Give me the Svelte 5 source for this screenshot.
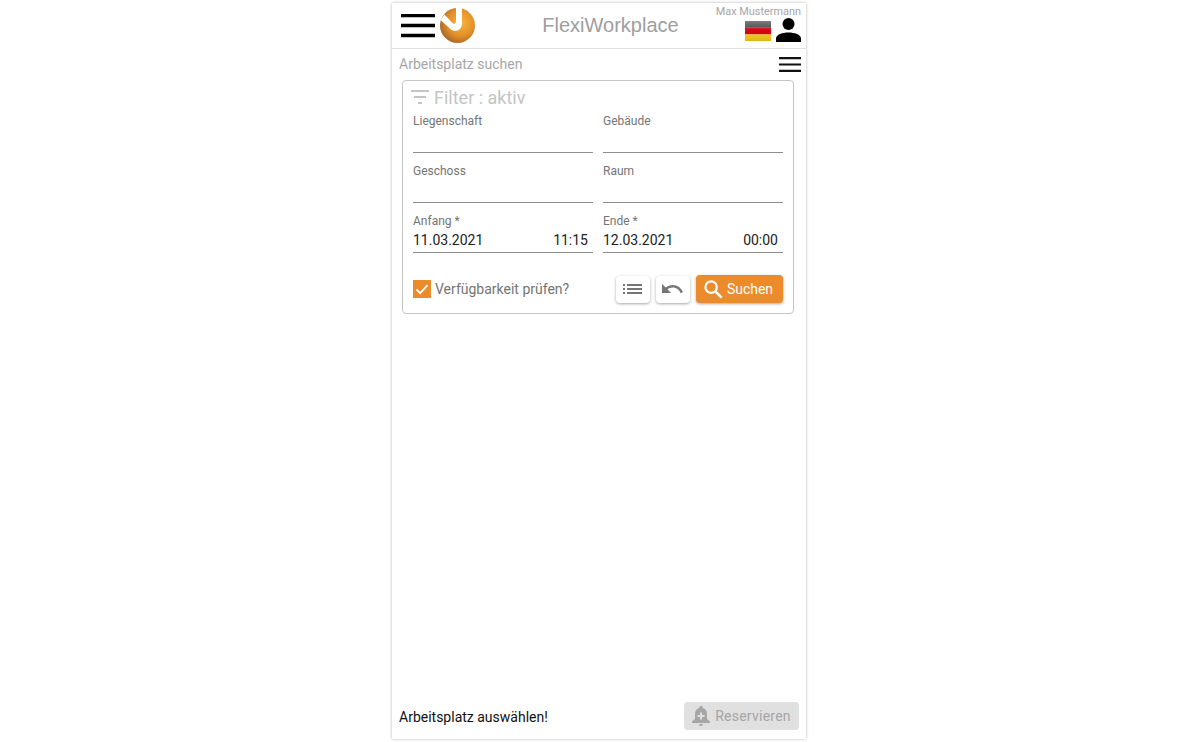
<script>
  const rows = [
    [{ label: 'Liegenschaft' }, { label: 'Gebäude' }],
    [{ label: 'Geschoss' }, { label: 'Raum' }],
    [
      { label: 'Anfang *', date: '11.03.2021', time: '11:15' },
      { label: 'Ende *', date: '12.03.2021', time: '00:00' }
    ]
  ];
</script>

<div class="page">
  <div class="phone">
    <header class="topbar">
      <svg class="burger" width="34" height="24" viewBox="0 0 34 24">
        <path d="M0 1.500h34M0 11.500h34M0 21.500h34" stroke="#000" stroke-width="3.400" />
      </svg>
      <svg class="logo" width="35" height="35" viewBox="0 0 35 35">
        <defs>
          <radialGradient id="ball" cx="0.6" cy="0.42" r="0.62">
            <stop offset="0" stop-color="#f9b53e" />
            <stop offset="0.6" stop-color="#e49028" />
            <stop offset="1" stop-color="#a8682a" />
          </radialGradient>
        </defs>
        <circle cx="17.500" cy="17.500" r="17.500" fill="url(#ball)" />
        <path d="M0.500 12 L11 21.500 C16 25 22 22 22 15 L22 0 L16 0 L16 12 C16 15.500 14.500 16.500 12.500 15 L4.500 6.500 Z" fill="#fff" />
      </svg>
      <div class="title">FlexiWorkplace</div>
      <div class="account">
        <div class="user-name">Max Mustermann</div>
        <div class="account-icons">
          <svg class="flag" width="26" height="20" viewBox="0 0 26 20">
            <defs>
              <linearGradient id="sheen" x1="0" y1="0" x2="0" y2="1">
                <stop offset="0" stop-color="#fff" stop-opacity="0.3" />
                <stop offset="0.5" stop-color="#fff" stop-opacity="0" />
                <stop offset="1" stop-color="#000" stop-opacity="0.08" />
              </linearGradient>
            </defs>
            <rect width="26" height="6.800" fill="#444" />
            <rect y="6.800" width="26" height="6.600" fill="#d8000f" />
            <rect y="13.400" width="26" height="6.600" fill="#f2c51c" />
            <rect width="26" height="20" fill="url(#sheen)" />
          </svg>
          <svg class="person" width="25" height="24" viewBox="0 0 25 24">
            <circle cx="12.500" cy="6" r="6" />
            <path d="M0 24v-3.500C0 16.500 6.500 14.500 12.500 14.500S25 16.500 25 20.500V24Z" />
          </svg>
        </div>
      </div>
    </header>

    <div class="subbar">
      <span class="sub-title">Arbeitsplatz suchen</span>
      <svg width="22" height="15" viewBox="0 0 22 15">
        <path d="M0 1.200h22M0 7.500h22M0 13.800h22" stroke="#111" stroke-width="2.200" />
      </svg>
    </div>

    <section class="filter-card">
      <div class="filter-head">
        <svg width="18" height="14" viewBox="0 0 18 14">
          <path d="M0 1h18M3 7h12M7 13h4" stroke="#c4c4c4" stroke-width="2" />
        </svg>
        <span>Filter : aktiv</span>
      </div>

      <div class="fields">
        {#each rows as row}
          {#each row as field}
            <div class="field">
              <div class="field-label">{field.label}</div>
              <div class="field-value">
                <span>{field.date ?? ''}</span>
                <span class="time">{field.time ?? ''}</span>
              </div>
            </div>
          {/each}
        {/each}
      </div>

      <div class="actions">
        <div class="check">
          <span class="box">
            <svg width="18" height="18" viewBox="0 0 18 18">
              <path d="M3.500 9.500l3.700 3.700 7.300-8" fill="none" stroke="#fff" stroke-width="1.800" />
            </svg>
          </span>
          <span>Verfügbarkeit prüfen?</span>
        </div>
        <div class="buttons">
          <button class="icon-btn list-btn" aria-label="Liste">
            <svg width="19" height="10" viewBox="0 0 19 10">
              <path d="M0 1h2M4 1h15M0 5h2M4 5h15M0 9h2M4 9h15" stroke="#757575" stroke-width="1.800" />
            </svg>
          </button>
          <button class="icon-btn" aria-label="Zurück">
            <svg width="22" height="11" viewBox="2 7.500 21.500 10">
              <path d="M12.500 8c-2.650 0-5.050.99-6.900 2.600L2 7v9h9l-3.620-3.620c1.390-1.160 3.160-1.880 5.120-1.880 3.540 0 6.550 2.310 7.600 5.500l2.370-.78C21.080 11.030 17.150 8 12.500 8z" fill="#757575" />
            </svg>
          </button>
          <button class="search-btn">
            <svg width="19" height="19" viewBox="0 0 20 20">
              <circle cx="7.500" cy="7.500" r="6" fill="none" stroke="#fff" stroke-width="2.300" />
              <path d="M12 12l6.500 6.500" stroke="#fff" stroke-width="2.800" />
            </svg>
            Suchen
          </button>
        </div>
      </div>
    </section>

    <footer class="footer">
      <span class="hint">Arbeitsplatz auswählen!</span>
      <button class="reserve" disabled>
        <svg width="18" height="20" viewBox="0 0 18 20">
          <path d="M7 18h4a2 2 0 0 1-4 0ZM9 0a1.500 1.500 0 0 1 1.500 1.800C13.500 2.600 15 5 15 8v5l3 2.500v1.500H0v-1.500L3 13V8c0-3 1.500-5.400 4.500-6.200A1.500 1.500 0 0 1 9 0Z" fill="#a6a6a6" />
          <path d="M9 6.500v7M5.500 10h7" stroke="#e0e0e0" stroke-width="2" />
        </svg>
        Reservieren
      </button>
    </footer>
  </div>
</div>

<style>
  :global(body) {
    margin: 0;
    background: #fff;
    font-family: Roboto, "Liberation Sans", Arial, sans-serif;
  }

  .page {
    display: flex;
    height: 742px;
    padding: 3px 0 0 392px;
    box-sizing: border-box;
  }

  .phone {
    width: 414px;
    height: 736px;
    display: flex;
    flex-direction: column;
    box-shadow: 0 0 3px rgba(0, 0, 0, 0.28);
    background: #fff;
  }

  .topbar {
    height: 45px;
    flex: none;
    display: flex;
    align-items: center;
    padding: 0 5px 0 9px;
    border-bottom: 1px solid #e0e0e0;
    position: relative;
  }

  .burger {
    margin-right: 5px;
  }

  .logo {
    margin-top: -1px;
  }

  .title {
    flex: 1;
    text-align: center;
    font-family: "Liberation Sans", Arial, sans-serif;
    font-size: 20px;
    color: #9e9e9e;
    padding-left: 4px;
    padding-right: 59px;
  }

  .account {
    position: absolute;
    right: 5px;
    top: 3px;
    display: flex;
    flex-direction: column;
    align-items: flex-end;
  }

  .user-name {
    font-size: 10.9px;
    line-height: 12px;
    color: #a6a6a6;
  }

  .account-icons {
    display: flex;
    align-items: center;
    gap: 5px;
  }

  .flag {
    margin-top: 1px;
  }

  .subbar {
    height: 30px;
    flex: none;
    display: flex;
    align-items: center;
    justify-content: space-between;
    padding: 0 5px 0 7px;
  }

  .sub-title {
    font-size: 14px;
    color: #a6a6a6;
  }

  .filter-card {
    margin: 1px 12px 0 10px;
    height: 234px;
    box-sizing: border-box;
    border: 1px solid #c4c4c4;
    border-radius: 4px;
    padding: 5px 10px 0;
  }

  .filter-head {
    display: flex;
    align-items: center;
    gap: 5px;
    height: 22px;
    margin-left: -2px;
    font-size: 18px;
    color: #c4c4c4;
  }

  .fields {
    display: grid;
    grid-template-columns: 180px 180px;
    column-gap: 10px;
    margin-top: 4px;
  }

  .field {
    height: 50px;
    position: relative;
  }

  .field-label {
    font-size: 12px;
    line-height: 14px;
    color: #757575;
    padding-top: 2px;
  }

  .field-value {
    position: absolute;
    left: 0;
    right: 0;
    top: 19px;
    height: 21px;
    border-bottom: 1px solid #8c8c8c;
    display: flex;
    justify-content: space-between;
    font-size: 14px;
    line-height: 18px;
    color: #212121;
  }

  .time {
    padding-right: 5px;
  }

  .actions {
    display: flex;
    align-items: center;
    justify-content: space-between;
    margin-top: 13px;
  }

  .check {
    display: flex;
    align-items: center;
    gap: 4px;
    font-size: 14px;
    color: #757575;
  }

  .box {
    width: 18px;
    height: 18px;
    display: block;
    background: #ec8b2c;
  }

  .box svg {
    display: block;
  }

  .buttons {
    display: flex;
    gap: 6px;
  }

  button {
    font-family: inherit;
    border: 0;
    padding: 0;
    display: flex;
    align-items: center;
    justify-content: center;
  }

  .icon-btn {
    width: 34px;
    height: 27px;
    margin-top: 1px;
    border-radius: 4px;
    background: #fff;
    box-shadow: 0 1px 3px rgba(0, 0, 0, 0.35);
  }

  .list-btn svg {
    margin: -2px 1px 0 0;
  }

  .search-btn {
    width: 87px;
    height: 28px;
    gap: 4px;
    padding-right: 2px;
    border-radius: 4px;
    background: #ec8b2c;
    color: #fff;
    font-size: 14px;
    box-shadow: 0 1px 3px rgba(0, 0, 0, 0.35);
  }

  .footer {
    margin-top: auto;
    height: 44px;
    flex: none;
    display: flex;
    align-items: center;
    justify-content: space-between;
    padding: 0 7px;
  }

  .hint {
    font-size: 14px;
    color: #111;
  }

  .reserve {
    width: 115px;
    height: 28px;
    margin-top: -2px;
    gap: 5px;
    border-radius: 4px;
    background: #e0e0e0;
    color: #a6a6a6;
    font-size: 14px;
    letter-spacing: 0.25px;
  }
</style>
